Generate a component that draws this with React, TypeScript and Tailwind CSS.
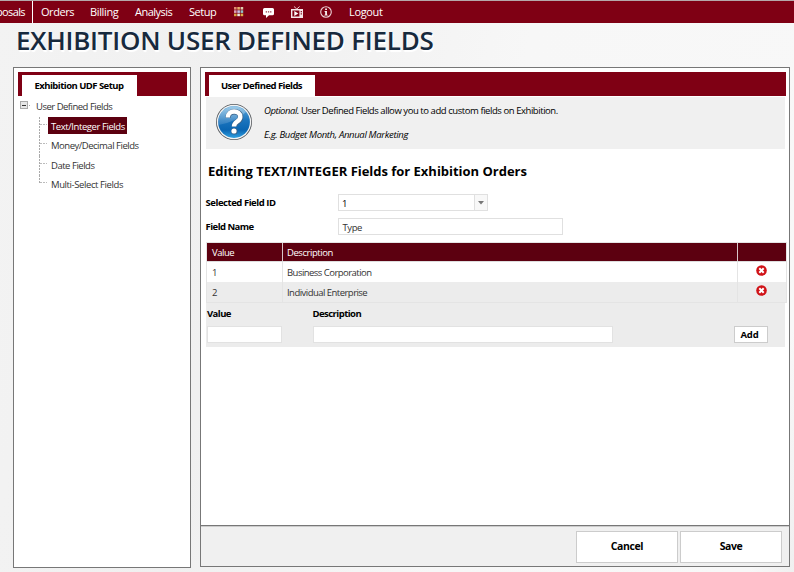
import React from "react";

function GridIcon() {
  const colors = ["#e08a72", "#e5b06a", "#e0cfae", "#dc9cb8", "#c9c0e8", "#8fc3c9", "#d8a53f", "#f0ece0", "#e0b04a"];
  return (
    <svg width="10" height="10" viewBox="0 0 10 10">
      {colors.map((c, i) => (
        <rect key={i} x={(i % 3) * 3.3} y={Math.floor(i / 3) * 3.3} width="2.6" height="2.6" fill={c} />
      ))}
    </svg>
  );
}

function ChatIcon() {
  return (
    <svg width="11" height="10" viewBox="0 0 11 10">
      <path d="M1.5 0h8A1.5 1.5 0 0 1 11 1.5v4.3a1.5 1.5 0 0 1-1.5 1.5H6L3 10V7.300H1.500A1.500 1.500 0 0 1 0 5.800V1.500A1.500 1.500 0 0 1 1.500 0Z" fill="#fff" />
      <path d="M2.700 3.200h1.300v1.300H2.700zM4.900 3.200h1.300v1.300H4.900zM7.100 3.200h1.300v1.300H7.100z" fill="#96384a" />
    </svg>
  );
}

function TvIcon() {
  return (
    <svg width="12" height="12" viewBox="0 0 12 12">
      <path d="M3 .5 5.800 3 8.600.5" fill="none" stroke="#e8c8ce" strokeWidth="1" />
      <path fillRule="evenodd" d="M0 3h12v9H0zM1.400 4.400v6.200h7V4.400zM9.700 5v1.200h1.200V5zM9.700 7.300v1.200h1.200V7.300z" fill="#f5e6e9" />
      <path d="M3.300 4.900 7.300 7.500 3.300 10.100z" fill="#fff" />
    </svg>
  );
}

function InfoIcon() {
  return (
    <svg width="12" height="12" viewBox="0 0 12 12">
      <circle cx="6" cy="6" r="5.300" fill="none" stroke="#ecd0d6" strokeWidth="1.100" />
      <path d="M5.200 2.500h1.700V4H5.200zM4.500 4.900h2.400v3.800h.8v.9H4.400v-.9h.8V5.800h-.7z" fill="#fff" />
    </svg>
  );
}

function HelpIcon() {
  return (
    <svg width="38" height="38" viewBox="0 0 38 38">
      <defs>
        <linearGradient id="ball" x1="0" y1="0" x2="0" y2="1">
          <stop offset="0" stopColor="#5fa9da" />
          <stop offset="0.45" stopColor="#1b74bd" />
          <stop offset="0.75" stopColor="#0a65b2" />
          <stop offset="1" stopColor="#2fa0e0" />
        </linearGradient>
        <linearGradient id="gloss" x1="0" y1="0" x2="0" y2="1">
          <stop offset="0" stopColor="#fff" stopOpacity="0.4" />
          <stop offset="1" stopColor="#fff" stopOpacity="0.12" />
        </linearGradient>
      </defs>
      <circle cx="19" cy="19" r="18" fill="#54585c" />
      <circle cx="19" cy="19" r="17.200" fill="#f2f3f4" />
      <circle cx="19" cy="19" r="15.900" fill="url(#ball)" />
      <path d="M3.500 22A15.700 15.700 0 0 1 31 9Q21 19 3.500 22Z" fill="url(#gloss)" />
      <path d="M13 14.800C13 6.800 25.500 6.800 25.500 14.200C25.500 19 19.300 18.700 19.300 23.600" fill="none" stroke="#3b6288" strokeWidth="5.600" />
      <circle cx="19.300" cy="28.300" r="3.200" fill="#3b6288" />
      <path d="M12.800 14.500C12.800 6.600 25.300 6.600 25.300 13.900C25.300 18.700 19 18.500 19 23.400" fill="none" stroke="#fff" strokeWidth="4.400" />
      <circle cx="19" cy="28" r="2.600" fill="#fff" />
    </svg>
  );
}

function DeleteIcon() {
  return (
    <svg width="11" height="11" viewBox="0 0 11 11">
      <circle cx="5.500" cy="5.500" r="5.300" fill="#d01217" />
      <path d="M3.300 3.300 7.700 7.700M7.700 3.300 3.300 7.700" stroke="#fff" strokeWidth="2" />
    </svg>
  );
}

function TabBar({ label, width }: { label: string; width: string }) {
  return (
    <div className="flex h-6 items-end bg-[#7f0014] pl-1">
      <div className={`${width} h-[21px] bg-white pr-[1px] text-center text-[9.5px] leading-[21px] font-bold tracking-[-0.53px] whitespace-nowrap`}>
        {label}
      </div>
    </div>
  );
}

const treeItems = [
  { label: "Text/Integer Fields", selected: true, spacing: "tracking-[-0.42px]" },
  { label: "Money/Decimal Fields", selected: false, spacing: "tracking-[-0.48px]" },
  { label: "Date Fields", selected: false, spacing: "tracking-[-0.48px]" },
  { label: "Multi-Select Fields", selected: false, spacing: "tracking-[-0.4px]" },
];

function Tree() {
  return (
    <div className="text-[9.5px] text-[#333]">
      <div className="flex h-[21px] items-center pl-[2px] leading-[19px]">
        <svg width="12" height="9" viewBox="0 0 12 9" className="mb-[3px]" shapeRendering="crispEdges">
          <rect x="0.500" y="0.500" width="7" height="7" fill="#e6e6e6" stroke="#aaa" />
          <path d="M2 4h4" stroke="#333" />
          <path d="M9 4h1" stroke="#aaa" />
        </svg>
        <span className="mb-[1px] ml-[4px] tracking-[-0.5px]">User Defined Fields</span>
      </div>
      {treeItems.map((item, i) => (
        <div key={item.label} className="flex h-[19.4px] pl-[21px]">
          <svg width="9" height="20" viewBox="0 0 9 20" className="shrink-0" shapeRendering="crispEdges">
            <path d={i === 3 ? "M.5 0V8" : "M.5 0V20"} stroke="#aaa" strokeDasharray="2 1" />
            <path d="M1 7.500H8" stroke="#bbb" strokeDasharray="2 1" />
          </svg>
          <div
            className={`h-[17px] px-[3px] leading-[19px] whitespace-nowrap ${item.spacing} ${
              item.selected ? "w-[79px] bg-[#5c0010] text-white" : ""
            }`}
          >
            {item.label}
          </div>
        </div>
      ))}
    </div>
  );
}

const rows = [
  { value: "1", description: "Business Corporation" },
  { value: "2", description: "Individual Enterprise" },
];

export default function App() {
  return (
    <div
      className="h-[572px] w-[794px] overflow-hidden bg-[linear-gradient(100deg,#f3f3f3_0%,#f0f0f0_30%,#f7f7f7_60%,#f8f8f8_95%,#f0f0f0_100%)] text-black"
      style={{ fontFamily: '"Open Sans", "Noto Sans", sans-serif' }}
    >
      <nav className="flex h-[23px] border-t border-[#b5a8aa] bg-[#7f0014] text-[11px] leading-[21px] whitespace-nowrap text-white">
        <div className="flex w-[33px] justify-end border-r border-white pr-[7px] tracking-[-0.6px]">posals</div>
        <div className="w-[49px] pl-[8px] tracking-[-0.45px]">Orders</div>
        <div className="w-[45px] pl-[8px] tracking-[-0.35px]">Billing</div>
        <div className="w-[54px] pl-[8px] tracking-[-0.5px]">Analysis</div>
        <div className="w-[53px] pl-[8px] tracking-[-0.5px]">Setup</div>
        <div className="pt-[6px]"><GridIcon /></div>
        <div className="ml-[19px] pt-[7px]"><ChatIcon /></div>
        <div className="ml-[17px] pt-[5px]"><TvIcon /></div>
        <div className="ml-[17px] pt-[5px]"><InfoIcon /></div>
        <div className="ml-[17px] tracking-[-0.35px]">Logout</div>
      </nav>

      <h1 className="h-[44px] pl-[16px] text-[26px] leading-[35px] font-semibold tracking-[-0.24px] whitespace-nowrap text-[#17293d] [text-shadow:1px_2px_1px_#fff]">
        EXHIBITION USER DEFINED FIELDS
      </h1>

      <div className="flex gap-[9px] pl-[13px]">
        <aside className="h-[501px] w-[178px] border border-[#777] bg-white pt-1 pr-[3px] pl-1">
          <TabBar label="Exhibition UDF Setup" width="w-[115px]" />
          <Tree />
        </aside>

        <main className="flex h-[500px] w-[590px] flex-col border border-[#777] bg-white">
          <div className="h-[457px] pt-1 pr-[3px] pl-1">
            <TabBar label="User Defined Fields" width="w-[106px]" />

            <div className="mt-[1px] mr-[1px] ml-[1px] flex h-[52px] bg-[#f0f0f0] pl-[9px] text-[9.5px]">
              <div className="pt-[6px]"><HelpIcon /></div>
              <div className="pt-[2px] pl-[11px] leading-[24px] whitespace-nowrap">
                <p className="tracking-[-0.44px]"><em>Optional.</em> User Defined Fields allow you to add custom fields on Exhibition.</p>
                <p className="tracking-[-0.33px] italic">E.g. Budget Month, Annual Marketing</p>
              </div>
            </div>

            <h2 className="mt-[12px] pl-[3px] text-[13px] leading-[20px] font-bold tracking-[-0.02px] whitespace-nowrap">
              Editing TEXT/INTEGER Fields for Exhibition Orders
            </h2>

            <div className="mt-[13px] flex h-[17px] pl-[1px] text-[9.5px]">
              <label className="-ml-[0.5px] w-[132.5px] leading-[17px] font-bold tracking-[-0.45px]">Selected Field ID</label>
              <div className="flex w-[150px] border border-[#e0e0e0]">
                <span className="flex-1 pl-[3px] leading-[17px]">1</span>
                <span className="flex w-[13px] items-center justify-center border-l border-[#e0e0e0] bg-[#f8f8f8]">
                  <svg width="6" height="4" viewBox="0 0 6 4"><path d="M0 0h6L3 3.500z" fill="#777" /></svg>
                </span>
              </div>
            </div>
            <div className="mt-[7px] flex h-[17px] pl-[1px] text-[9.5px]">
              <label className="-ml-[0.5px] w-[132.5px] leading-[17px] font-bold tracking-[-0.53px]">Field Name</label>
              <div className="w-[225px] border border-[#e0e0e0] pl-[3.5px] leading-[18px] tracking-[-0.4px] text-[#333]">Type</div>
            </div>

            <div className="mt-[7px] -mr-[1px] ml-[1px] border border-[#e4e4e4] text-[9.5px] tracking-[-0.53px]">
              <div className="flex h-[19px] border-b border-[#ddd] bg-[#5c0010] leading-[19px] tracking-[-0.45px] text-white">
                <div className="w-[76px] border-r border-[#d8c5c8] pl-[5px]">Value</div>
                <div className="w-[455px] border-r border-[#d8c5c8] pl-[4px]">Description</div>
              </div>
              {rows.map((row, i) => (
                <div key={row.value} className={`flex h-5 leading-[21px] text-[#333] ${i === 1 ? "bg-[#ececec]" : "bg-white"}`}>
                  <div className="w-[76px] border-r border-[#e4e4e4] pl-[5px]">{row.value}</div>
                  <div className="w-[455px] border-r border-[#e4e4e4] pl-[4px]">{row.description}</div>
                  <div className="flex flex-1 justify-center pt-[3px] pr-[1px]"><DeleteIcon /></div>
                </div>
              ))}
            </div>

            <div className="mr-[1px] ml-[1px] h-[44px] bg-[#ececec] pl-[1px] text-[9.5px] font-bold tracking-[-0.55px]">
              <div className="flex h-[23px] leading-[21px]">
                <span className="w-[105.5px]">Value</span>
                <span>Description</span>
              </div>
              <div className="flex h-[17px]">
                <div className="w-[75px] border border-[#e2e2e2] bg-white" />
                <div className="ml-[31px] w-[300px] border border-[#e2e2e2] bg-white" />
                <button className="ml-[121px] w-[34px] border border-[#ccc] bg-white pr-[3px] text-center leading-[15px] tracking-[-0.2px]">Add</button>
              </div>
            </div>
          </div>

          <footer className="flex flex-1 justify-end gap-[2px] border-t border-[#777] bg-[#f0f0f0] pr-[7px] text-[10.5px] font-bold tracking-[-0.4px] shadow-[inset_0_1px_0_#ccc]">
            <button className="mt-[5px] h-[32px] w-[102px] border border-[#ccc] bg-white pb-[1px]">Cancel</button>
            <button className="mt-[5px] h-[32px] w-[102px] border border-[#ccc] bg-white pb-[1px]">Save</button>
          </footer>
        </main>
      </div>
    </div>
  );
}
